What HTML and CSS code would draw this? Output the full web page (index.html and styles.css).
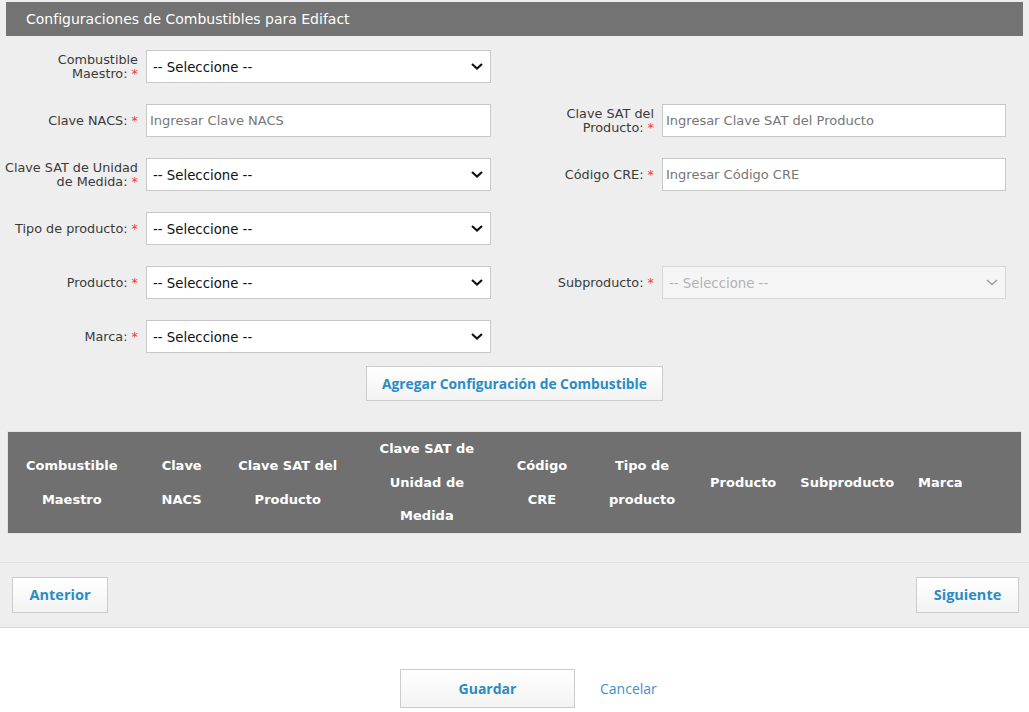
FILE: index.html
```html
<!DOCTYPE html>
<html lang="es">
<head>
<meta charset="utf-8">
<title>Configuraciones de Combustibles para Edifact</title>
<link rel="stylesheet" href="styles.css">
</head>
<body>
<div class="panel">
  <div class="title">Configuraciones de Combustibles para Edifact</div>

  <div class="form">
    <div class="field">
      <label class="lbl"><span>Combustible<br>Maestro: <span class="req">*</span></span></label>
      <div class="select">
        <select><option>-- Seleccione --</option></select>
        <svg class="chev" viewBox="0 0 12 7" width="12" height="7"><path d="M1 1 L6 5.5 L11 1" fill="none" stroke="currentColor" stroke-width="2.2"/></svg>
      </div>
    </div>
    <div class="field empty"></div>

    <div class="field">
      <label class="lbl"><span>Clave NACS: <span class="req">*</span></span></label>
      <input class="inp" type="text" placeholder="Ingresar Clave NACS">
    </div>
    <div class="field right">
      <label class="lbl"><span>Clave SAT del<br>Producto: <span class="req">*</span></span></label>
      <input class="inp" type="text" placeholder="Ingresar Clave SAT del Producto">
    </div>

    <div class="field">
      <label class="lbl"><span>Clave SAT de Unidad<br>de Medida: <span class="req">*</span></span></label>
      <div class="select">
        <select><option>-- Seleccione --</option></select>
        <svg class="chev" viewBox="0 0 12 7" width="12" height="7"><path d="M1 1 L6 5.5 L11 1" fill="none" stroke="currentColor" stroke-width="2.2"/></svg>
      </div>
    </div>
    <div class="field right">
      <label class="lbl"><span>Código CRE: <span class="req">*</span></span></label>
      <input class="inp" type="text" placeholder="Ingresar Código CRE">
    </div>

    <div class="field">
      <label class="lbl"><span>Tipo de producto: <span class="req">*</span></span></label>
      <div class="select">
        <select><option>-- Seleccione --</option></select>
        <svg class="chev" viewBox="0 0 12 7" width="12" height="7"><path d="M1 1 L6 5.5 L11 1" fill="none" stroke="currentColor" stroke-width="2.2"/></svg>
      </div>
    </div>
    <div class="field empty"></div>

    <div class="field">
      <label class="lbl"><span>Producto: <span class="req">*</span></span></label>
      <div class="select">
        <select><option>-- Seleccione --</option></select>
        <svg class="chev" viewBox="0 0 12 7" width="12" height="7"><path d="M1 1 L6 5.5 L11 1" fill="none" stroke="currentColor" stroke-width="2.2"/></svg>
      </div>
    </div>
    <div class="field right">
      <label class="lbl"><span>Subproducto: <span class="req">*</span></span></label>
      <div class="select disabled">
        <select disabled><option>-- Seleccione --</option></select>
        <svg class="chev" viewBox="0 0 12 7" width="12" height="7"><path d="M1 1 L6 5.5 L11 1" fill="none" stroke="currentColor" stroke-width="1.4"/></svg>
      </div>
    </div>

    <div class="field">
      <label class="lbl"><span>Marca: <span class="req">*</span></span></label>
      <div class="select">
        <select><option>-- Seleccione --</option></select>
        <svg class="chev" viewBox="0 0 12 7" width="12" height="7"><path d="M1 1 L6 5.5 L11 1" fill="none" stroke="currentColor" stroke-width="2.2"/></svg>
      </div>
    </div>
    <div class="field empty"></div>
  </div>

  <div class="add-row">
    <button class="btn btn-add" type="button">Agregar Configuración de Combustible</button>
  </div>

  <table class="grid">
    <colgroup>
      <col class="c1"><col class="c2"><col class="c3"><col class="c4"><col class="c5">
      <col class="c6"><col class="c7"><col class="c8"><col class="c9"><col class="c10">
    </colgroup>
    <thead>
      <tr>
        <th>Combustible<br>Maestro</th>
        <th>Clave<br>NACS</th>
        <th>Clave SAT del<br>Producto</th>
        <th>Clave SAT de<br>Unidad de<br>Medida</th>
        <th>Código<br>CRE</th>
        <th>Tipo de<br>producto</th>
        <th>Producto</th>
        <th>Subproducto</th>
        <th>Marca</th>
        <th></th>
      </tr>
    </thead>
  </table>
</div>

<div class="nav">
  <button class="btn btn-prev" type="button">Anterior</button>
  <button class="btn btn-next" type="button">Siguiente</button>
</div>

<div class="actions">
  <button class="btn btn-save" type="button">Guardar</button>
  <a class="cancel" href="#">Cancelar</a>
</div>
</body>
</html>
```

FILE: styles.css
```css
* { box-sizing: border-box; }

body {
  margin: 0;
  background: #ffffff;
  font-family: "DejaVu Sans", sans-serif;
  color: #333333;
}

.panel {
  background: #eeeeee;
  padding: 2px 6px 28px 6px;
}

.title {
  height: 34px;
  background: #737373;
  color: #ffffff;
  font-size: 14px;
  line-height: 34px;
  padding-left: 20px;
}

.form {
  display: grid;
  grid-template-columns: 516px 501px;
  grid-auto-rows: 33px;
  row-gap: 21px;
  margin-top: 14px;
}

.field {
  display: flex;
  align-items: center;
}

.lbl {
  width: 140px;
  flex: none;
  display: flex;
  justify-content: flex-end;
  padding-right: 8px;
  font-size: 12.8px;
  line-height: 14px;
  color: #3a3a3a;
}

.lbl > span {
  text-align: right;
  white-space: nowrap;
}

.req { color: #ee3b3b; }

.inp,
.select {
  width: 345px;
  height: 33px;
  flex: none;
}

.right .inp,
.right .select { width: 344px; }

.inp {
  border: 1px solid #c8c8c8;
  background: #ffffff;
  padding: 0 0 0 3px;
  font-family: inherit;
  font-size: 13px;
  color: #333;
  outline: none;
}

.inp::placeholder { color: #767676; }

.select {
  position: relative;
}

.select select {
  appearance: none;
  -webkit-appearance: none;
  width: 100%;
  height: 100%;
  border: 1px solid #c8c8c8;
  background: #ffffff;
  padding: 1px 0 0 6px;
  font-family: inherit;
  font-size: 13.3px;
  color: #111;
  outline: none;
  border-radius: 0;
}

.select .chev {
  position: absolute;
  right: 8px;
  top: 13px;
  color: #111;
  pointer-events: none;
}

.select.disabled select {
  background: #f9f9f9;
  color: #9a9a9a;
  border-color: #cfcfcf;
}

.select.disabled .chev { color: #9a9a9a; }

.add-row {
  display: flex;
  justify-content: center;
  margin-top: 13px;
}

.btn {
  border: 1px solid #cccccc;
  background: linear-gradient(#ffffff, #f3f3f3);
  color: #2a8cc4;
  font-family: "Open Sans", sans-serif;
  font-weight: 700;
  font-size: 14.5px;
  border-radius: 0;
  cursor: pointer;
}

.btn-add {
  width: 297px;
  height: 35px;
  font-size: 13.8px;
  padding: 0;
}

.grid {
  width: 1015px;
  margin: 30px 0 0 1px;
  border-collapse: collapse;
  table-layout: fixed;
  background: #707070;
  border: 1px solid #e4e4dc;
}

.grid th {
  color: #ffffff;
  font-size: 13px;
  font-weight: 700;
  line-height: 33.7px;
  text-align: center;
  vertical-align: middle;
  padding: 0;
}

.c1 { width: 128px; }
.c2 { width: 92px; }
.c3 { width: 120px; }
.c4 { width: 158px; }
.c5 { width: 72px; }
.c6 { width: 128px; }
.c7 { width: 74px; }
.c8 { width: 134px; }
.c9 { width: 52px; }
.c10 { width: 55px; }

.nav {
  display: flex;
  justify-content: space-between;
  background: #eeeeee;
  border-top: 1px solid #e2e2da;
  border-bottom: 1px solid #d6d6d6;
  padding: 14px 10px 14px 12px;
}

.btn-prev { width: 96px; height: 36px; padding: 0 0 2px; }
.btn-next { width: 103px; height: 36px; padding: 0 0 2px; }

.actions {
  display: flex;
  align-items: center;
  gap: 25px;
  padding: 41px 0 0 400px;
}

.btn-save { width: 175px; height: 39px; padding: 0; font-size: 14px; }

.cancel {
  font-family: "Open Sans", sans-serif;
  font-size: 14px;
  color: #3a8fcf;
  text-decoration: none;
}
```
